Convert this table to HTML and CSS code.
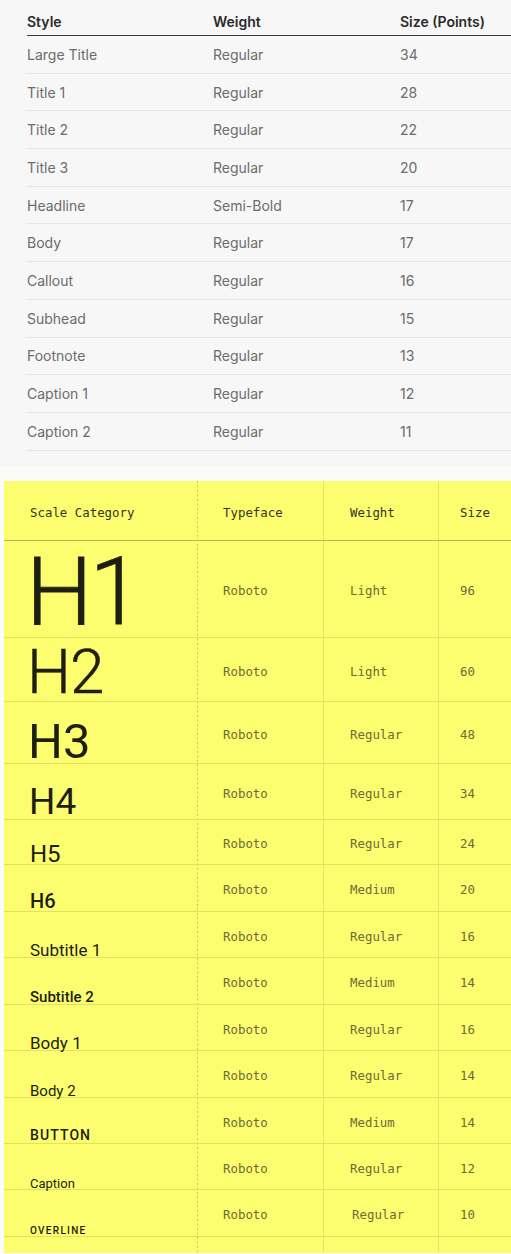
FILE: index.html
```html
<!DOCTYPE html>
<html>
<head>
<meta charset="utf-8">
<link rel="stylesheet" href="styles.css">
</head>
<body>
<section class="ios">
  <div class="ios-head">
    <span>Style</span><span>Weight</span><span>Size (Points)</span>
  </div>
  <div class="ios-row"><span>Large Title</span><span>Regular</span><span>34</span></div>
  <div class="ios-row"><span>Title 1</span><span>Regular</span><span>28</span></div>
  <div class="ios-row"><span>Title 2</span><span>Regular</span><span>22</span></div>
  <div class="ios-row"><span>Title 3</span><span>Regular</span><span>20</span></div>
  <div class="ios-row"><span>Headline</span><span>Semi-Bold</span><span>17</span></div>
  <div class="ios-row"><span>Body</span><span>Regular</span><span>17</span></div>
  <div class="ios-row"><span>Callout</span><span>Regular</span><span>16</span></div>
  <div class="ios-row"><span>Subhead</span><span>Regular</span><span>15</span></div>
  <div class="ios-row"><span>Footnote</span><span>Regular</span><span>13</span></div>
  <div class="ios-row"><span>Caption 1</span><span>Regular</span><span>12</span></div>
  <div class="ios-row"><span>Caption 2</span><span>Regular</span><span>11</span></div>
</section>

<section class="md">
  <div class="md-row md-head">
    <div class="cell c1 mono head">Scale Category</div>
    <div class="cell c2 mono head">Typeface</div>
    <div class="cell c3 mono head">Weight</div>
    <div class="cell c4 mono head">Size</div>
  </div>
  <div class="md-row r-h1">
    <div class="cell c1 label"><span>H1</span></div>
    <div class="cell c2 mono">Roboto</div><div class="cell c3 mono">Light</div><div class="cell c4 mono">96</div>
  </div>
  <div class="md-row r-h2">
    <div class="cell c1 label"><span>H2</span></div>
    <div class="cell c2 mono">Roboto</div><div class="cell c3 mono">Light</div><div class="cell c4 mono">60</div>
  </div>
  <div class="md-row r-h3">
    <div class="cell c1 label"><span>H3</span></div>
    <div class="cell c2 mono">Roboto</div><div class="cell c3 mono">Regular</div><div class="cell c4 mono">48</div>
  </div>
  <div class="md-row r-h4">
    <div class="cell c1 label"><span>H4</span></div>
    <div class="cell c2 mono">Roboto</div><div class="cell c3 mono">Regular</div><div class="cell c4 mono">34</div>
  </div>
  <div class="md-row r-h5">
    <div class="cell c1 label"><span>H5</span></div>
    <div class="cell c2 mono">Roboto</div><div class="cell c3 mono">Regular</div><div class="cell c4 mono">24</div>
  </div>
  <div class="md-row r-h6">
    <div class="cell c1 label"><span>H6</span></div>
    <div class="cell c2 mono">Roboto</div><div class="cell c3 mono">Medium</div><div class="cell c4 mono">20</div>
  </div>
  <div class="md-row r-s1">
    <div class="cell c1 label"><span>Subtitle 1</span></div>
    <div class="cell c2 mono">Roboto</div><div class="cell c3 mono">Regular</div><div class="cell c4 mono">16</div>
  </div>
  <div class="md-row r-s2">
    <div class="cell c1 label"><span>Subtitle 2</span></div>
    <div class="cell c2 mono">Roboto</div><div class="cell c3 mono">Medium</div><div class="cell c4 mono">14</div>
  </div>
  <div class="md-row r-b1">
    <div class="cell c1 label"><span>Body 1</span></div>
    <div class="cell c2 mono">Roboto</div><div class="cell c3 mono">Regular</div><div class="cell c4 mono">16</div>
  </div>
  <div class="md-row r-b2">
    <div class="cell c1 label"><span>Body 2</span></div>
    <div class="cell c2 mono">Roboto</div><div class="cell c3 mono">Regular</div><div class="cell c4 mono">14</div>
  </div>
  <div class="md-row r-btn">
    <div class="cell c1 label"><span>BUTTON</span></div>
    <div class="cell c2 mono">Roboto</div><div class="cell c3 mono">Medium</div><div class="cell c4 mono">14</div>
  </div>
  <div class="md-row r-cap">
    <div class="cell c1 label"><span>Caption</span></div>
    <div class="cell c2 mono">Roboto</div><div class="cell c3 mono">Regular</div><div class="cell c4 mono">12</div>
  </div>
  <div class="md-row r-over">
    <div class="cell c1 label"><span>OVERLINE</span></div>
    <div class="cell c2 mono">Roboto</div><div class="cell c3 mono shift">Regular</div><div class="cell c4 mono">10</div>
  </div>
  <div class="md-row r-end">
    <div class="cell c1"></div><div class="cell c2"></div><div class="cell c3"></div><div class="cell c4"></div>
  </div>
</section>
</body>
</html>
```

FILE: styles.css
```css
* { box-sizing: border-box; }

body {
  margin: 0;
  background: #fbfbf8;
  width: 511px;
}

/* ---------- iOS table ---------- */
.ios {
  background: #f7f7f7;
  height: 466px;
  padding-left: 27px;
  font-family: Inter, "Noto Sans", sans-serif;
  font-size: 14px;
  line-height: 17px;
}

.ios-head,
.ios-row {
  display: grid;
  grid-template-columns: 186px 187px 1fr;
}

.ios-head {
  height: 36px;
  align-items: end;
  padding-bottom: 5px;
  border-bottom: 1.5px solid #3a3a3a;
  color: #2a2a2a;
  font-weight: 600;
}

.ios-row {
  height: 37.7px;
  align-items: center;
  border-bottom: 1px solid #e4e4e4;
  color: #6c6c6c;
}

/* ---------- Material table ---------- */
.md {
  margin: 15px 0 0 4px;
  background-color: #fdfd70;
  background-image: linear-gradient(to bottom, #c4c45a 0 50%, transparent 50% 100%);
  background-size: 1px 4.5px;
  background-repeat: repeat-y;
  background-position: 193px 0;
}

.md-row {
  display: grid;
  grid-template-columns: 194px 126px 115px 1fr;
  border-bottom: 1px solid #e2e25d;
}

.md-head {
  height: 60px;
  border-bottom-color: #b9b94e;
}

.cell {
  display: flex;
  min-width: 0;
}

.c2, .c3 {
  border-right: 1px solid #e4e45f;
}

.mono {
  align-items: center;
  padding-top: 3px;
  font-family: "DejaVu Sans Mono", "Liberation Mono", monospace;
  font-size: 12.4px;
  color: #6c6c34;
  white-space: nowrap;
}

.mono.head {
  color: #34341f;
}

.c1 { padding-left: 26px; }
.c2 { padding-left: 25px; }
.c3 { padding-left: 26px; }
.c4 { padding-left: 21px; }

.c3.shift { padding-left: 28px; }

.label {
  align-items: flex-end;
  font-family: Roboto, "Liberation Sans", sans-serif;
  color: #1e1e12;
  line-height: 1;
  white-space: nowrap;
}

.r-h1 { height: 97px; }
.r-h1 .label span { font-size: 94px; font-weight: 300; line-height: 0.8; margin: 0 0 7px -4px; letter-spacing: -3px; -webkit-text-stroke: 0.8px #1e1e12; }

.r-h2 { height: 64px; }
.r-h2 .label span { font-size: 62px; font-weight: 300; line-height: 0.8; margin: 0 0 4px -3px; letter-spacing: -1px; -webkit-text-stroke: 0.5px #1e1e12; }

.r-h3 { height: 62px; }
.r-h3 .label span { font-size: 49px; font-weight: 400; line-height: 0.8; margin: 0 0 2px -2px; }

.r-h4 { height: 56px; }
.r-h4 .label span { font-size: 37px; font-weight: 400; margin: 0 0 -1px -1px; }

.r-h5 { height: 45px; }
.r-h5 .label span { font-size: 24px; font-weight: 400; margin-bottom: -2px; }

.r-h6 { height: 47px; }
.r-h6 .label span { font-size: 20px; font-weight: 500; margin-bottom: 0; }

.r-s1 { height: 46px; }
.r-s1 .label span { font-size: 17px; font-weight: 400; margin-bottom: -2px; }

.r-s2 { height: 47px; }
.r-s2 .label span { font-size: 15px; font-weight: 500; margin-bottom: -1px; }

.r-b1 { height: 46px; }
.r-b1 .label span { font-size: 17px; font-weight: 400; margin-bottom: -2px; }

.r-b2 { height: 47px; }
.r-b2 .label span { font-size: 15px; font-weight: 400; margin-bottom: -2px; }

.r-btn { height: 46px; }
.r-btn .label span { font-size: 14px; font-weight: 500; letter-spacing: 1.1px; margin-bottom: 1px; }

.r-cap { height: 46px; }
.r-cap .label span { font-size: 13px; font-weight: 400; margin-bottom: -1px; }

.r-over { height: 47px; }
.r-over .label span { font-size: 10px; font-weight: 500; letter-spacing: 1.3px; margin-bottom: 0; }

.r-end {
  height: 16px;
  border-bottom: none;
}
```
